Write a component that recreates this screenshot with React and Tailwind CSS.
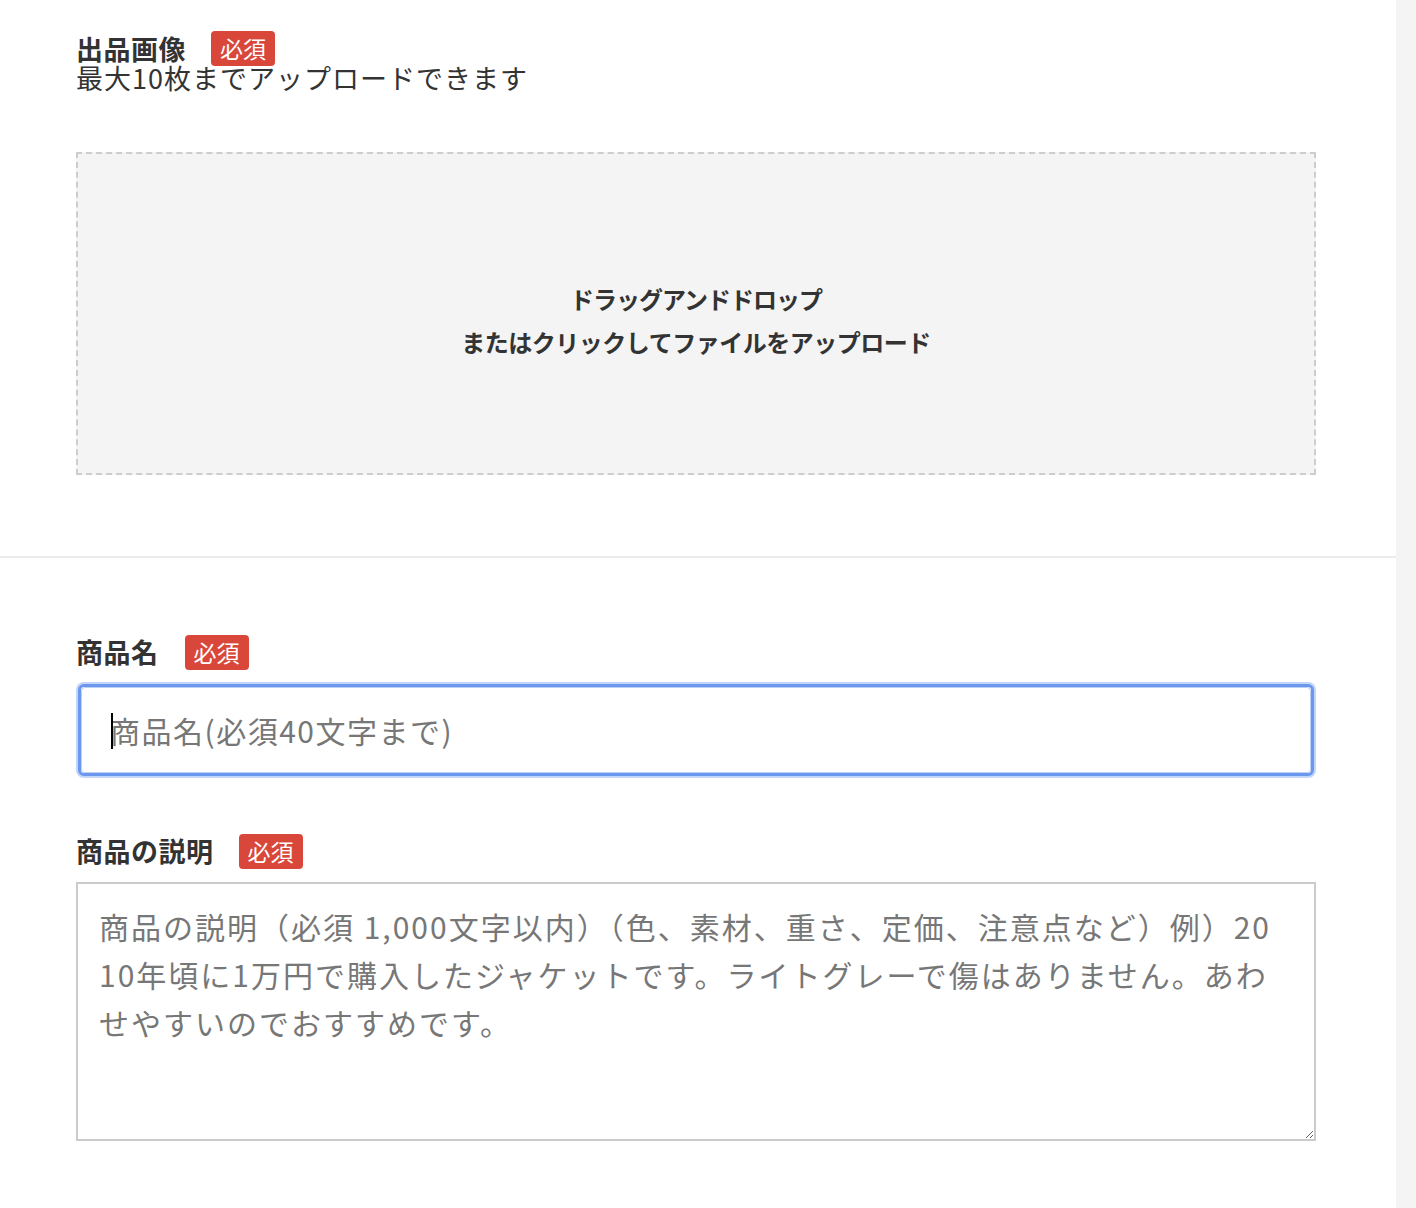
export default function App() {
  const font = { fontFamily: '"Noto Sans CJK JP", "Noto Sans", sans-serif' }

  return (
    <div className="flex min-h-[1208px] w-full bg-white text-[#333]" style={font}>
      <div className="flex-1 bg-white">
        {/* 出品画像 */}
        <section className="pl-[76px] pr-[80px] pt-[31px] pb-[81px] border-b-2 border-[#ececec]">
          <div className="flex items-center h-[35px]">
            <h2 className="text-[27px] font-bold leading-[30px] tracking-[0.5px]">出品画像</h2>
            <span className="ml-[25px] flex items-center justify-center h-[35px] w-[64px] rounded-[4px] bg-[#d9473b] text-white text-[23px] leading-none">必須</span>
          </div>
          <p className="text-[27px] leading-[24px] tracking-[1px]">最大10枚までアップロードできます</p>

          <div className="mt-[62px] h-[323px] border-2 border-dashed border-[#cdcdcd] bg-[#f4f4f4] flex flex-col items-center justify-center cursor-pointer">
            <p className="text-[24px] font-bold leading-[43px] tracking-[-1px] mt-[12px]">ドラッグアンドドロップ</p>
            <p className="text-[24px] font-bold leading-[43px] tracking-[-0.5px]">またはクリックしてファイルをアップロード</p>
          </div>
        </section>

        {/* 商品名 */}
        <section className="pl-[76px] pr-[80px] pt-[79px] pb-[60px]">
          <div className="flex items-center h-[30px]">
            <label className="text-[27px] font-bold leading-[30px] tracking-[0.5px]">商品名</label>
            <span className="ml-[26px] flex items-center justify-center h-[35px] w-[64px] rounded-[4px] bg-[#d9473b] text-white text-[23px] leading-none">必須</span>
          </div>
          <div className="mt-[15px] p-[2px] rounded-[8px] bg-[#c3d5f8]">
            <div className="relative rounded-[6px] border-[3px] border-[#6b97ec] bg-white">
              <input
                type="text"
                placeholder="商品名(必須40文字まで)"
                className="block w-full h-[86px] px-[28px] text-[30px] tracking-[1.5px] outline-none placeholder:text-[#777] bg-white rounded-[4px] border border-[#bcd0f6]"
              />
              <span className="absolute left-[30px] top-[26px] w-[2px] h-[36px] bg-black" />
            </div>
          </div>

          {/* 商品の説明 */}
          <div className="mt-[58px] flex items-center h-[30px]">
            <label className="text-[27px] font-bold leading-[30px] tracking-[0.5px]">商品の説明</label>
            <span className="ml-[25px] flex items-center justify-center h-[35px] w-[64px] rounded-[4px] bg-[#d9473b] text-white text-[23px] leading-none">必須</span>
          </div>
          <textarea
            placeholder={'商品の説明（必須 1,000文字以内）（色、素材、重さ、定価、注意点など）例）20\n10年頃に1万円で購入したジャケットです。ライトグレーで傷はありません。あわ\nせやすいのでおすすめです。'}
            className="mt-[16px] block w-full h-[259px] border-2 border-[#cbcbcb] px-[21px] py-[18px] text-[30px] leading-[48px] tracking-[2px] outline-none placeholder:text-[#777]"
          />
        </section>
      </div>
      <div className="w-[20px] shrink-0 bg-[#f4f4f4]" />
    </div>
  )
}
